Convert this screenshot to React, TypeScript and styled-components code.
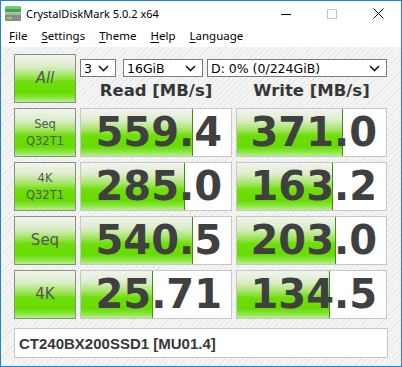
import React from "react";
import styled, { createGlobalStyle } from "styled-components";

const GlobalStyle = createGlobalStyle`
    html, body {
        margin: 0;
        padding: 0;
        background: #ffffff;
    }
`;

const greenFill = `linear-gradient(180deg, #f2f4f0 0%, #dcedca 24%, #a4e563 44%, #6ede0a 57%, #66dc00 80%, #8fe64a 92%, #b9f08e 100%)`;

const Window = styled.div`
    width: 402px;
    height: 367px;
    box-sizing: border-box;
    border: 1px solid #1883d7;
    display: flex;
    flex-direction: column;
    background: #ffffff;
    overflow: hidden;
`;

const TitleBar = styled.div`
    height: 26px;
    display: flex;
    align-items: center;
    padding-left: 3px;
    font-family: "Noto Sans", sans-serif;
    font-size: 11px;
    color: #000;
`;

const TitleText = styled.span`
    margin-left: 4px;
    margin-top: -1px;
`;

const Controls = styled.div`
    margin-left: auto;
    display: flex;
    align-self: stretch;
`;

const ControlButton = styled.div`
    width: 46px;
    display: flex;
    align-items: center;
    justify-content: center;
    margin-top: -1px;
`;

const MenuBar = styled.div`
    height: 20px;
    display: flex;
    align-items: center;
    padding: 0 0 3px 1px;
    box-sizing: border-box;
    font-family: "Noto Sans", sans-serif;
    font-size: 11.5px;
    color: #000;
`;

const MenuItem = styled.span`
    padding: 0 7px;
    u {
        text-decoration: underline;
        text-underline-offset: 2px;
    }
`;

const Content = styled.div`
    flex: 1;
    padding: 7px 0 0 13px;
    background: repeating-linear-gradient(
        135deg,
        #f4f4f4 0px,
        #f4f4f4 3px,
        #e8e8e8 3px,
        #e8e8e8 4px
    );
`;

const Grid = styled.div`
    display: grid;
    grid-template-columns: 62px 152px 151px;
    grid-auto-rows: 49px;
    column-gap: 4px;
    row-gap: 5px;
`;

const GreenButton = styled.div<{ $size: number; $italic?: boolean }>`
    box-sizing: border-box;
    border: 1px solid #84927f;
    background: ${greenFill};
    display: flex;
    flex-direction: column;
    align-items: center;
    justify-content: center;
    font-family: "DejaVu Sans", sans-serif;
    font-size: ${(p) => p.$size}px;
    font-style: ${(p) => (p.$italic ? "italic" : "normal")};
    line-height: 17px;
    color: #555555;
`;

const TopArea = styled.div`
    grid-column: 2 / span 2;
    display: flex;
    flex-direction: column;
`;

const SelectRow = styled.div`
    display: flex;
    margin-top: 5px;
    height: 18px;
`;

const Select = styled.div<{ $width: number; $gap: number }>`
    box-sizing: border-box;
    width: ${(p) => p.$width}px;
    margin-right: ${(p) => p.$gap}px;
    height: 18px;
    border: 1px solid #7a7a7a;
    background: #ffffff;
    display: flex;
    align-items: center;
    justify-content: space-between;
    padding: 0 6px 0 3px;
    font-family: "DejaVu Sans", sans-serif;
    font-size: 12.5px;
    color: #000;
`;

const Headers = styled.div`
    flex: 1;
    display: grid;
    grid-template-columns: 152px 151px;
    column-gap: 4px;
    align-items: center;
`;

const Header = styled.div`
    text-align: center;
    font-family: "DejaVu Sans", sans-serif;
    font-weight: bold;
    font-size: 16.5px;
    color: #363636;
    padding-top: 1px;
`;

const ValueCell = styled.div`
    position: relative;
    box-sizing: border-box;
    border: 1px solid #c6c6c6;
    background: #ffffff;
    overflow: hidden;
`;

const Meter = styled.div`
    position: absolute;
    left: 0;
    top: 0;
    bottom: 0;
    box-sizing: border-box;
    background: ${greenFill};
    border-right: 1px solid #3f8f1f;
`;

const ValueText = styled.div`
    position: relative;
    text-align: right;
    padding-right: 9px;
    font-family: "DejaVu Sans", sans-serif;
    font-weight: bold;
    font-size: 40px;
    line-height: 47px;
    color: #404040;
`;

const ModelBox = styled.div`
    box-sizing: border-box;
    margin-top: 9px;
    width: 374px;
    height: 30px;
    border: 1px solid #c6c6c6;
    background: #ffffff;
    display: flex;
    align-items: center;
    padding-left: 4px;
    font-family: "Liberation Sans", sans-serif;
    font-weight: bold;
    font-size: 15px;
    color: #383838;
`;

const Chevron = () => (
    <svg width="11" height="7" viewBox="0 0 11 7">
        <path d="M1 1 L5.5 5.5 L10 1" fill="none" stroke="#1a1a1a" strokeWidth="1.6" />
    </svg>
);

const AppIcon = () => (
    <svg width="18" height="16" viewBox="0 0 18 16">
        <rect x="1" y="0.5" width="16" height="6" rx="1" fill="#3aa84a" />
        <rect x="1" y="0.5" width="16" height="2.5" rx="1" fill="#6cc776" />
        <rect x="1" y="7" width="16" height="8" rx="1" fill="#8a8a8a" />
        <rect x="1" y="7" width="16" height="2" fill="#b0b0b0" />
        <rect x="3" y="11" width="5" height="2" fill="#7ddc4a" />
    </svg>
);

const rows = [
    { label: ["Seq", "Q32T1"], read: 559.4, write: 371.0, readText: "559.4", writeText: "371.0" },
    { label: ["4K", "Q32T1"], read: 285.0, write: 163.2, readText: "285.0", writeText: "163.2" },
    { label: ["Seq"], read: 540.5, write: 203.0, readText: "540.5", writeText: "203.0" },
    { label: ["4K"], read: 25.71, write: 134.5, readText: "25.71", writeText: "134.5" },
];

// CrystalDiskMark meter is logarithmic: log10(score * 10) / 5
const meter = (v: number) => Math.max(0, Math.min(1, Math.log10(v * 10) / 5)) * 100;

const Value = ({ value, text }: { value: number; text: string }) => (
    <ValueCell>
        <Meter style={{ width: `${meter(value)}%` }} />
        <ValueText>{text}</ValueText>
    </ValueCell>
);

export default function App() {
    return (
        <>
            <GlobalStyle />
            <Window>
                <TitleBar>
                    <AppIcon />
                    <TitleText>CrystalDiskMark 5.0.2 x64</TitleText>
                    <Controls>
                        <ControlButton>
                            <svg width="10" height="10" viewBox="0 0 10 10">
                                <path d="M0 5.5 H10" stroke="#000" strokeWidth="1" />
                            </svg>
                        </ControlButton>
                        <ControlButton>
                            <svg width="10" height="10" viewBox="0 0 10 10">
                                <rect x="0.5" y="0.5" width="9" height="9" fill="none" stroke="#c4c4c4" strokeWidth="1" />
                            </svg>
                        </ControlButton>
                        <ControlButton>
                            <svg width="11" height="11" viewBox="0 0 11 11">
                                <path d="M0.5 0.5 L10.5 10.5 M10.5 0.5 L0.5 10.5" stroke="#000" strokeWidth="1" />
                            </svg>
                        </ControlButton>
                    </Controls>
                </TitleBar>
                <MenuBar>
                    <MenuItem><u>F</u>ile</MenuItem>
                    <MenuItem><u>S</u>ettings</MenuItem>
                    <MenuItem><u>T</u>heme</MenuItem>
                    <MenuItem><u>H</u>elp</MenuItem>
                    <MenuItem><u>L</u>anguage</MenuItem>
                </MenuBar>
                <Content>
                    <Grid>
                        <GreenButton $size={15} $italic>All</GreenButton>
                        <TopArea>
                            <SelectRow>
                                <Select $width={36} $gap={7}>3<Chevron /></Select>
                                <Select $width={80} $gap={4}>16GiB<Chevron /></Select>
                                <Select $width={180} $gap={0}>D: 0% (0/224GiB)<Chevron /></Select>
                            </SelectRow>
                            <Headers>
                                <Header>Read [MB/s]</Header>
                                <Header>Write [MB/s]</Header>
                            </Headers>
                        </TopArea>
                        {rows.map((r) => (
                            <React.Fragment key={r.label.join(" ") + r.readText}>
                                <GreenButton $size={r.label.length > 1 ? 11.5 : 15}>
                                    {r.label.map((l) => (
                                        <span key={l}>{l}</span>
                                    ))}
                                </GreenButton>
                                <Value value={r.read} text={r.readText} />
                                <Value value={r.write} text={r.writeText} />
                            </React.Fragment>
                        ))}
                    </Grid>
                    <ModelBox>CT240BX200SSD1 [MU01.4]</ModelBox>
                </Content>
            </Window>
        </>
    );
}
